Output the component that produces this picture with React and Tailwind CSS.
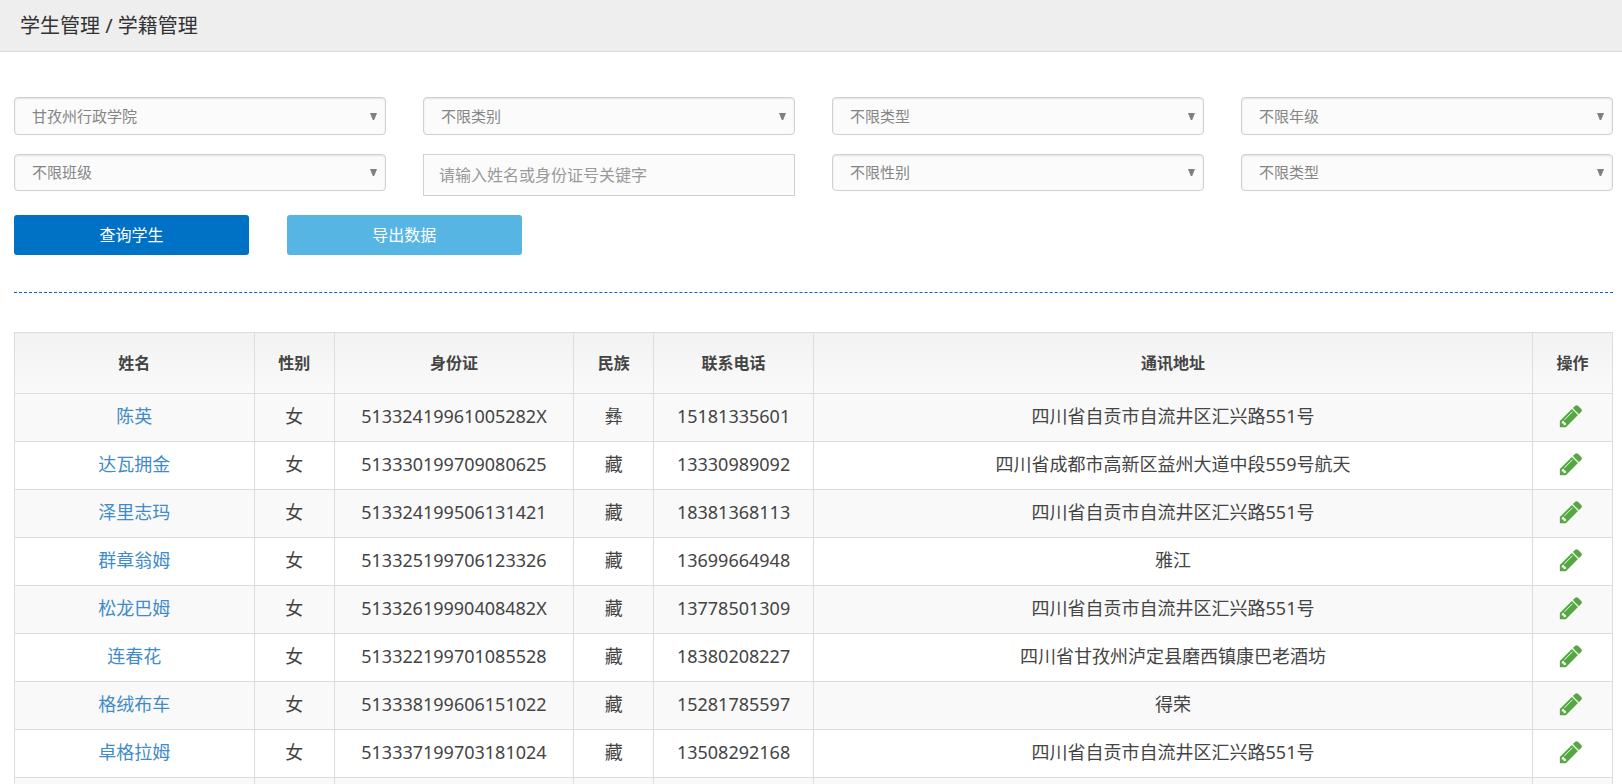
import { useState } from "react";

const filters = [
    { id: "school", label: "学校", option: "甘孜州行政学院" },
    { id: "category", label: "类别", option: "不限类别" },
    { id: "type", label: "类型", option: "不限类型" },
    { id: "grade", label: "年级", option: "不限年级" },
    { id: "class", label: "班级", option: "不限班级" },
    { id: "keyword", label: "关键字", input: true },
    { id: "gender", label: "性别", option: "不限性别" },
    { id: "status", label: "类型", option: "不限类型" },
];

const columns = [
    { title: "姓名", width: "w-[15%]" },
    { title: "性别", width: "w-[5%]" },
    { title: "身份证", width: "w-[15%]" },
    { title: "民族", width: "w-[5%]" },
    { title: "联系电话", width: "w-[10%]" },
    { title: "通讯地址", width: "w-[45%]" },
    { title: "操作", width: "w-[5%]" },
];

const students = [
    { name: "陈英", gender: "女", idCard: "51332419961005282X", nation: "彝", phone: "15181335601", address: "四川省自贡市自流井区汇兴路551号" },
    { name: "达瓦拥金", gender: "女", idCard: "513330199709080625", nation: "藏", phone: "13330989092", address: "四川省成都市高新区益州大道中段559号航天" },
    { name: "泽里志玛", gender: "女", idCard: "513324199506131421", nation: "藏", phone: "18381368113", address: "四川省自贡市自流井区汇兴路551号" },
    { name: "群章翁姆", gender: "女", idCard: "513325199706123326", nation: "藏", phone: "13699664948", address: "雅江" },
    { name: "松龙巴姆", gender: "女", idCard: "51332619990408482X", nation: "藏", phone: "13778501309", address: "四川省自贡市自流井区汇兴路551号" },
    { name: "连春花", gender: "女", idCard: "513322199701085528", nation: "藏", phone: "18380208227", address: "四川省甘孜州泸定县磨西镇康巴老酒坊" },
    { name: "格绒布车", gender: "女", idCard: "513338199606151022", nation: "藏", phone: "15281785597", address: "得荣" },
    { name: "卓格拉姆", gender: "女", idCard: "513337199703181024", nation: "藏", phone: "13508292168", address: "四川省自贡市自流井区汇兴路551号" },
];

function PencilIcon() {
    return (
        <svg viewBox="0 0 1792 1792" className="size-[26px] fill-[#53a93f]" aria-hidden="true">
            <path d="M491 1536l91-91-235-235-91 91v107h128v128h107zm523-928q0-22-22-22-10 0-17 7l-542 542q-7 7-7 17 0 22 22 22 10 0 17-7l542-542q7-7 7-17zm-54-192l416 416-832 832h-416v-416zm683 96q0 53-37 90l-166 166-416-416 166-165q36-38 90-38 53 0 91 38l235 234q37 39 37 91z" />
        </svg>
    );
}

function FilterSelect({ id, label, option, height }) {
    return (
        <div className="relative">
            <select
                id={id}
                aria-label={label}
                className={`block w-full appearance-none rounded border border-[#d0d0d0] bg-[#fbfbfb] pl-[17px] pr-8 text-[15px] text-[#858585] shadow-[inset_0_1px_2px_rgba(0,0,0,0.1)] outline-none ${height}`}
            >
                <option>{option}</option>
            </select>
            <svg viewBox="0 0 7 7" className="pointer-events-none absolute inset-y-0 right-[9px] my-auto size-[7px] fill-[#808080]" aria-hidden="true">
                <path d="M0 0h7L4.2 7H2.8z" />
            </svg>
        </div>
    );
}

function Cell({ children }) {
    return <td className="border border-[#ddd] pb-1">{children}</td>;
}

export default function App() {
    const [keyword, setKeyword] = useState("");

    return (
        <div className="h-screen overflow-hidden bg-white font-['Noto_Sans','Noto_Sans_CJK_SC',sans-serif] text-[#444]">
            <header className="flex h-[52px] items-center border-b border-[#d9d9d9] bg-[#eee] px-5">
                <h1 className="text-xl text-[#333]">学生管理 / 学籍管理</h1>
            </header>

            <main className="pl-3.5 pr-[9px] pt-[45px]">
                <form onSubmit={(e) => e.preventDefault()}>
                    <div className="grid grid-cols-4 items-start gap-x-[37px] gap-y-[19px]">
                        {filters.map((f, i) =>
                            f.input ? (
                                <input
                                    key={f.id}
                                    id={f.id}
                                    type="text"
                                    aria-label={f.label}
                                    value={keyword}
                                    onChange={(e) => setKeyword(e.target.value)}
                                    placeholder="请输入姓名或身份证号关键字"
                                    className="block h-[42px] w-full border border-[#d0d0d0] bg-[#fbfbfb] px-[15px] text-base outline-none placeholder:text-[#999]"
                                />
                            ) : (
                                <FilterSelect key={f.id} {...f} height={i < 4 ? "h-[38px]" : "h-[37px]"} />
                            )
                        )}
                    </div>

                    <div className="mt-[19px] grid grid-cols-6 gap-x-[38px]">
                        <button type="submit" className="h-10 rounded-[3px] bg-[#0072c6] text-base text-white">
                            查询学生
                        </button>
                        <button type="button" className="h-10 rounded-[3px] bg-[#57b5e3] text-base text-white">
                            导出数据
                        </button>
                    </div>
                </form>

                <hr className="mb-[39px] mt-[37px] border-t border-dashed border-[#0068cb]" />

                <table className="w-full table-fixed border-collapse text-center">
                    <thead>
                        <tr className="h-[61px] bg-linear-to-b from-[#f2f2f2] to-[#fafafa]">
                            {columns.map((c) => (
                                <th key={c.title} className={`border border-[#ddd] text-base font-bold ${c.width}`}>
                                    {c.title}
                                </th>
                            ))}
                        </tr>
                    </thead>
                    <tbody className="text-lg leading-6">
                        {students.map((s) => (
                            <tr key={s.idCard} className="h-12 odd:bg-[#f9f9f9]">
                                <Cell>
                                    <a href="#" className="text-[#428bca]">{s.name}</a>
                                </Cell>
                                <Cell>{s.gender}</Cell>
                                <Cell>{s.idCard}</Cell>
                                <Cell>{s.nation}</Cell>
                                <Cell>{s.phone}</Cell>
                                <Cell>{s.address}</Cell>
                                <Cell>
                                    <a href="#" aria-label="编辑" className="flex justify-center pr-1">
                                        <PencilIcon />
                                    </a>
                                </Cell>
                            </tr>
                        ))}
                        <tr className="h-12 odd:bg-[#f9f9f9]">
                            {columns.map((c) => (
                                <Cell key={c.title} />
                            ))}
                        </tr>
                    </tbody>
                </table>
            </main>
        </div>
    );
}
